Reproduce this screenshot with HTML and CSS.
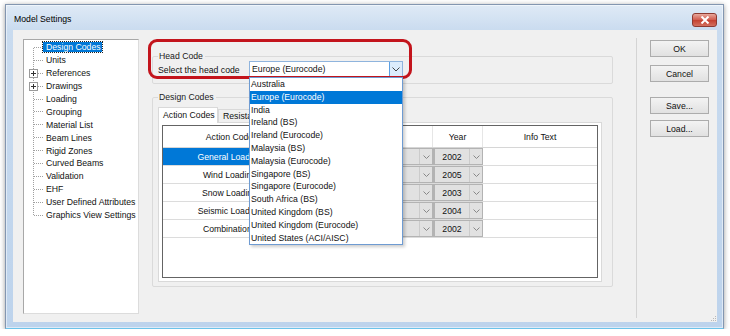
FILE: index.html
```html
<!DOCTYPE html>
<html>
<head>
	<meta charset="utf-8">
	<title>Model Settings</title>
	<link rel="stylesheet" href="styles.css">
</head>
<body>
<div class="window">
	<!-- 标题栏 -->
	<div class="titlebar">
		<span class="title">Model Settings</span>
		<span class="close"><svg width="10" height="8" viewBox="0 0 10 8"><path d="M1.5 0.5L8.5 7.5M8.5 0.5L1.5 7.5" stroke="#fff" stroke-width="2"/></svg></span>
	</div>
	<div class="client">
		<!-- 左侧树 -->
		<div class="tree">
			<ul>
				<li><span class="twig"></span><span class="label sel">Design Codes</span></li>
				<li><span class="twig"></span><span class="label">Units</span></li>
				<li><span class="twig"><svg class="plus" width="9" height="9"><rect x=".5" y=".5" width="8" height="8" fill="#fff" stroke="#9a9a9a"/><path d="M2 4.5h5M4.5 2v5" stroke="#333"/></svg></span><span class="label">References</span></li>
				<li><span class="twig"><svg class="plus" width="9" height="9"><rect x=".5" y=".5" width="8" height="8" fill="#fff" stroke="#9a9a9a"/><path d="M2 4.5h5M4.5 2v5" stroke="#333"/></svg></span><span class="label">Drawings</span></li>
				<li><span class="twig"></span><span class="label">Loading</span></li>
				<li><span class="twig"></span><span class="label">Grouping</span></li>
				<li><span class="twig"></span><span class="label">Material List</span></li>
				<li><span class="twig"></span><span class="label">Beam Lines</span></li>
				<li><span class="twig"></span><span class="label">Rigid Zones</span></li>
				<li><span class="twig"></span><span class="label">Curved Beams</span></li>
				<li><span class="twig"></span><span class="label">Validation</span></li>
				<li><span class="twig"></span><span class="label">EHF</span></li>
				<li><span class="twig"></span><span class="label">User Defined Attributes</span></li>
				<li><span class="twig"></span><span class="label">Graphics View Settings</span></li>
			</ul>
		</div>

		<!-- 主区域 -->
		<div class="main">
			<fieldset class="group head-group">
				<legend>Head Code</legend>
				<div class="field">
					<label>Select the head code</label>
					<div class="combo">
						<span class="combo-text">Europe (Eurocode)</span>
						<span class="combo-btn"><svg width="8" height="5"><path d="M0.5 0.5L4 4L7.5 0.5" fill="none" stroke="#444"/></svg></span>
						<ul class="droplist">
							<li>Australia</li>
							<li class="on">Europe (Eurocode)</li>
							<li>India</li>
							<li>Ireland (BS)</li>
							<li>Ireland (Eurocode)</li>
							<li>Malaysia (BS)</li>
							<li>Malaysia (Eurocode)</li>
							<li>Singapore (BS)</li>
							<li>Singapore (Eurocode)</li>
							<li>South Africa (BS)</li>
							<li>United Kingdom (BS)</li>
							<li>United Kingdom (Eurocode)</li>
							<li>United States (ACI/AISC)</li>
						</ul>
					</div>
				</div>
			</fieldset>

			<fieldset class="group codes-group">
				<legend>Design Codes</legend>
				<div class="tabs">
					<span class="tab active">Action Codes</span>
					<span class="tab">Resistance Codes</span>
				</div>
				<div class="tabpanel">
					<div class="grid">
						<div class="row hdr">
							<div class="cell">Action Code</div>
							<div class="cell"></div>
							<div class="cell">Year</div>
							<div class="cell">Info Text</div>
						</div>
						<div class="row">
							<div class="cell act sel">General Loading</div>
							<div class="pick"><span class="val"></span><span class="arr"><svg width="7" height="4"><path d="M0.5 0.5L3.5 3.5L6.5 0.5" fill="none" stroke="#888"/></svg></span></div>
							<div class="pick"><span class="val">2002</span><span class="arr"><svg width="7" height="4"><path d="M0.5 0.5L3.5 3.5L6.5 0.5" fill="none" stroke="#888"/></svg></span></div>
							<div class="cell"></div>
						</div>
						<div class="row">
							<div class="cell act">Wind Loading</div>
							<div class="pick"><span class="val"></span><span class="arr"><svg width="7" height="4"><path d="M0.5 0.5L3.5 3.5L6.5 0.5" fill="none" stroke="#888"/></svg></span></div>
							<div class="pick"><span class="val">2005</span><span class="arr"><svg width="7" height="4"><path d="M0.5 0.5L3.5 3.5L6.5 0.5" fill="none" stroke="#888"/></svg></span></div>
							<div class="cell"></div>
						</div>
						<div class="row">
							<div class="cell act">Snow Loading</div>
							<div class="pick"><span class="val"></span><span class="arr"><svg width="7" height="4"><path d="M0.5 0.5L3.5 3.5L6.5 0.5" fill="none" stroke="#888"/></svg></span></div>
							<div class="pick"><span class="val">2003</span><span class="arr"><svg width="7" height="4"><path d="M0.5 0.5L3.5 3.5L6.5 0.5" fill="none" stroke="#888"/></svg></span></div>
							<div class="cell"></div>
						</div>
						<div class="row">
							<div class="cell act">Seismic Loading</div>
							<div class="pick"><span class="val"></span><span class="arr"><svg width="7" height="4"><path d="M0.5 0.5L3.5 3.5L6.5 0.5" fill="none" stroke="#888"/></svg></span></div>
							<div class="pick"><span class="val">2004</span><span class="arr"><svg width="7" height="4"><path d="M0.5 0.5L3.5 3.5L6.5 0.5" fill="none" stroke="#888"/></svg></span></div>
							<div class="cell"></div>
						</div>
						<div class="row">
							<div class="cell act">Combinations</div>
							<div class="pick"><span class="val"></span><span class="arr"><svg width="7" height="4"><path d="M0.5 0.5L3.5 3.5L6.5 0.5" fill="none" stroke="#888"/></svg></span></div>
							<div class="pick"><span class="val">2002</span><span class="arr"><svg width="7" height="4"><path d="M0.5 0.5L3.5 3.5L6.5 0.5" fill="none" stroke="#888"/></svg></span></div>
							<div class="cell"></div>
						</div>
					</div>
				</div>
			</fieldset>

			<!-- 红色标注框 -->
			<div class="callout"></div>
		</div>

		<div class="sep"></div>

		<!-- 右侧按钮 -->
		<div class="buttons">
			<button class="btn">OK</button>
			<button class="btn btn-cancel">Cancel</button>
			<button class="btn btn-save">Save...</button>
			<button class="btn btn-load">Load...</button>
		</div>

		<svg class="grip" width="6" height="6"><path d="M5 1h1v1h-1zM3 3h1v1h-1zM5 3h1v1h-1zM1 5h1v1h-1zM3 5h1v1h-1zM5 5h1v1h-1z" fill="#b8b8b8"/></svg>
	</div>
</div>
</body>
</html>
```

FILE: styles.css
```css
*{margin: 0;padding: 0;box-sizing: border-box;}
body{font-family: "Liberation Sans", Arial, sans-serif;font-size: 8.7px;color: #111;background-color: #fff;}
ul{list-style: none;}

.window{margin: 4px 0 0 5px;width: 719px;height: 325px;border: 1px solid #8396b0;border-bottom-color: #6cc3ea;background: linear-gradient(#dfeaf6, #c9dbef 26px, #bdd3ec);box-shadow: 0 1px 5px rgba(0,0,0,.4), inset 0 0 0 1px rgba(255,255,255,.5);}
.titlebar{height: 25px;display: flex;justify-content: space-between;align-items: flex-start;padding-left: 8px;}
.title{padding-top: 9px;line-height: 11px;color: #000;}
.close{margin: 8px 6px 0 0;width: 25px;height: 14px;border: 1px solid #8d3a31;border-radius: 3px;background: linear-gradient(#e8a89c, #d0594c 50%, #c4402f 51%, #d3705f);display: flex;align-items: center;justify-content: center;}

.client{position: relative;margin: 0 6px 0 7px;height: 292px;background-color: #f0f0f0;display: flex;align-items: flex-start;padding: 9px 0 0 10px;}

/* 树 */
.tree{width: 116px;height: 275px;border: 1px solid #a8a8a8;border-right-color: #dcdcdc;border-bottom-color: #dcdcdc;background-color: #fff;}
.tree ul{position: relative;padding-top: 1px;}
.tree ul::before{content: "";position: absolute;left: 9px;top: 7.5px;width: 1px;height: 167.7px;background-image: linear-gradient(#a0a0a0 50%, transparent 50%);background-size: 1px 2px;}
.tree li{height: 12.9px;display: flex;align-items: center;}
.twig{position: relative;width: 19px;height: 100%;flex: none;}
.twig::before{content: "";position: absolute;left: 10px;top: 6px;width: 9px;height: 1px;background-image: linear-gradient(to right, #a0a0a0 50%, transparent 50%);background-size: 2px 1px;}
.plus{position: absolute;left: 5px;top: 2px;}
.label{line-height: 10px;padding: 0 1px 0 3px;white-space: nowrap;}
.label.sel{background-color: #0078d7;color: #fff;outline: 1px dotted #222;}

/* 主区域 */
.main{position: relative;width: 461px;margin: 12px 0 0 13px;}
.group{border: 1px solid #dadada;border-radius: 2px;padding: 0 5px 5px;min-width: 0;}
.group legend{padding: 0 2px 0 1px;line-height: 10px;color: #1a1a1a;}
.codes-group{margin-top: 8px;padding: 5px 5px 4px;}

.field{display: flex;align-items: center;height: 17px;}
.field label{width: 91px;}
.combo{position: relative;width: 154px;height: 17px;border: 1px solid #8fb4dd;background-color: #fff;display: flex;}
.combo-text{flex: 1;line-height: 15px;padding-left: 2px;}
.combo-btn{width: 13px;border-left: 1px solid #5a9fe3;background-color: #dcecfc;display: flex;align-items: center;justify-content: center;}
.droplist{position: absolute;z-index: 3;top: 100%;left: -1px;width: 154px;border: 1px solid #6e9bd2;background-color: #fff;box-shadow: 2px 2px 3px rgba(0,0,0,.2);}
.droplist li{height: 12.8px;line-height: 12.8px;padding-left: 1px;white-space: nowrap;}
.droplist li.on{background-color: #0078d7;color: #fff;}

.tabs{display: flex;align-items: flex-end;height: 15px;}
.tab{height: 13px;line-height: 12px;padding: 0 4px;border: 1px solid #d9d9d9;border-bottom: none;background-color: #f0f0f0;white-space: nowrap;overflow: hidden;width: 80px;}
.tab.active{position: relative;z-index: 1;width: 60px;height: 16px;margin-bottom: -1px;line-height: 14px;text-align: center;background-color: #fff;}
.tabpanel{width: 444px;height: 160px;border: 1px solid #d9d9d9;background-color: #fff;padding: 2px 3px 3px;}

/* 表格 */
.grid{height: 153px;border: 1px solid #646464;background-color: #fff;}
.row{display: grid;grid-template-columns: 134px 136px 50px 114px;height: 18px;border-bottom: 1px solid #dcdcdc;}
.row.hdr{height: 22px;border-bottom-color: #d6d6d6;}
.cell{display: flex;align-items: center;justify-content: center;border-right: 1px solid #e6e6e6;white-space: nowrap;overflow: hidden;}
.cell:last-child{border-right: none;}
.cell.sel{background-color: #0078d7;color: #fff;}
.pick{display: flex;background-color: #e1e1e1;border: 1px solid #b3b3b3;border-left-width: 2px;}
.pick .val{flex: 1;display: flex;align-items: center;justify-content: center;}
.pick .arr{width: 13px;border-left: 1px solid #cbcbcb;display: flex;align-items: center;justify-content: center;}

.callout{position: absolute;z-index: 2;left: -4px;top: -12px;width: 264px;height: 40px;border: 3px solid #c3141c;border-radius: 9px;pointer-events: none;}

.sep{width: 1px;height: 280px;margin: -1px 0 0 23px;background-color: #d4d4d4;}

.buttons{display: flex;flex-direction: column;margin: 1px 0 0 13px;width: 59px;}
.btn{height: 17px;font-family: inherit;font-size: 8.7px;color: #111;border: 1px solid #acacac;background: linear-gradient(#f3f3f3, #e1e1e1);}
.btn-cancel{margin-top: 8px;}
.btn-save{margin-top: 15px;}
.btn-load{margin-top: 6px;}

.grip{position: absolute;right: 1px;bottom: 1px;}
```
